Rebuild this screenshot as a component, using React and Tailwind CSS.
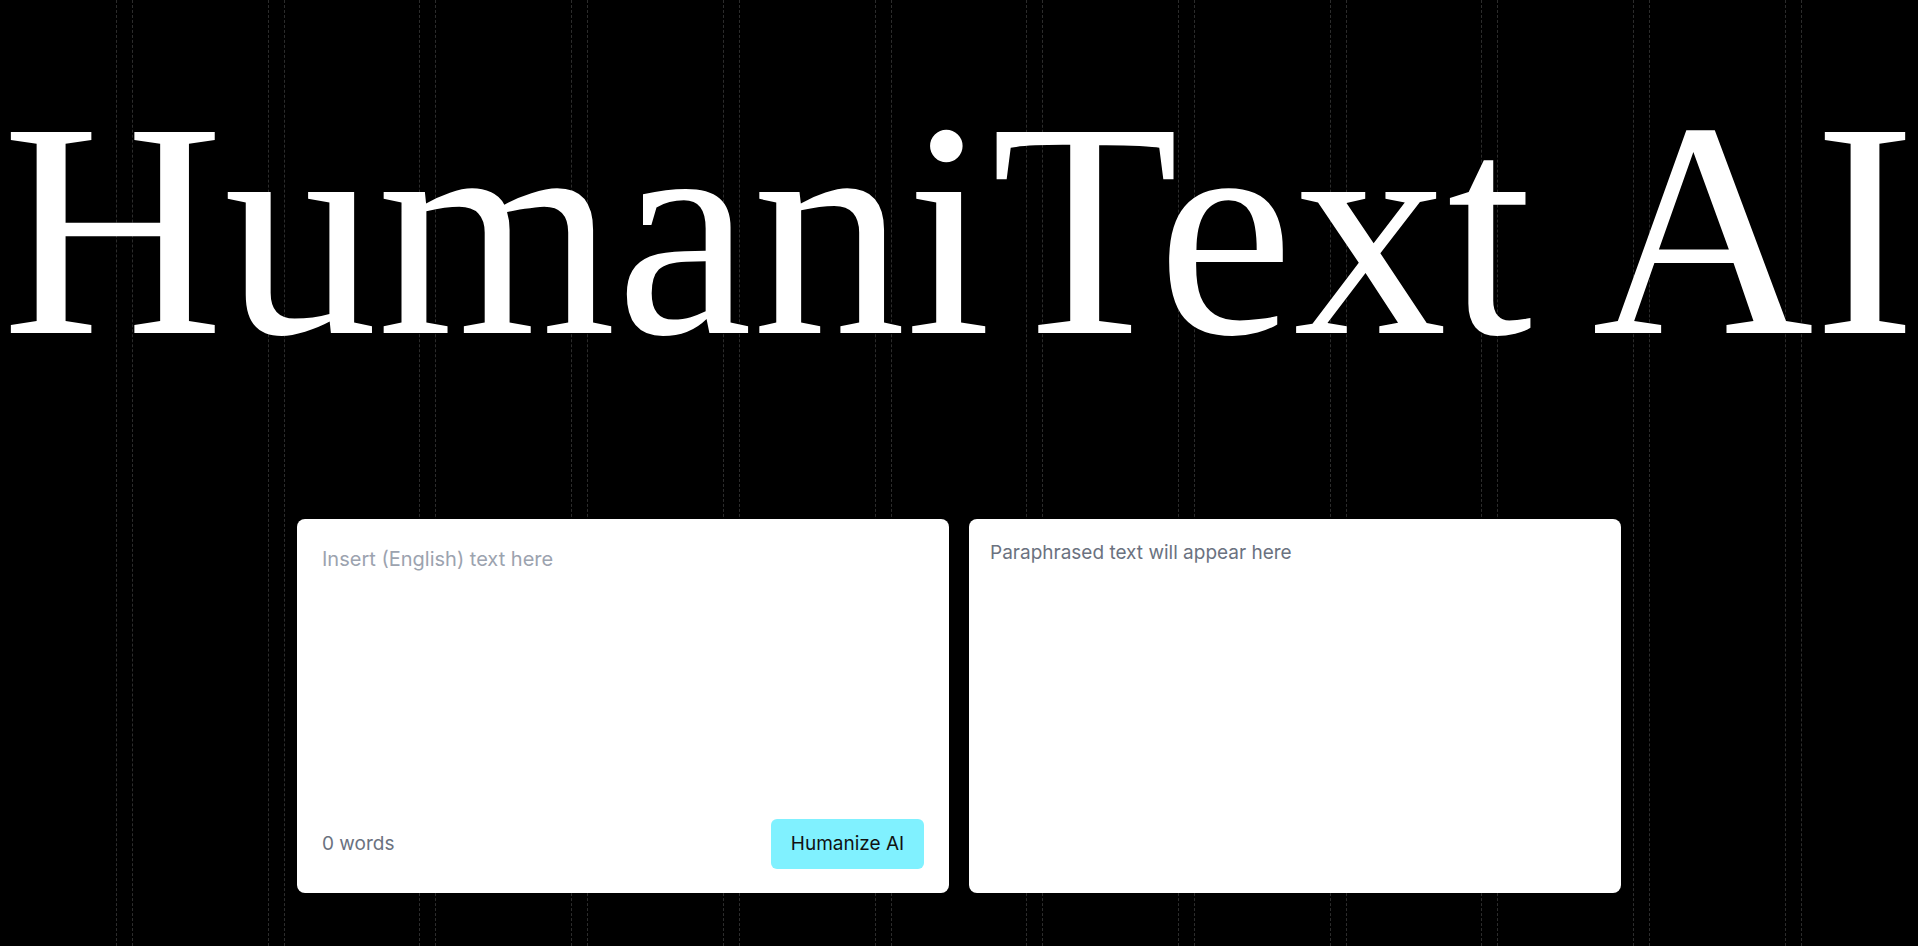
import React from 'react';

const guideLines = Array.from({ length: 12 });

export default function App() {
    return (
        <div className="relative min-h-screen w-full overflow-hidden bg-black [font-family:'Inter',sans-serif]">
            {/* Dashed guide lines in the background */}
            <div className="pointer-events-none absolute inset-0 flex justify-between px-[116px]">
                {guideLines.map((_, i) => (
                    <div key={i} className="h-full w-[17px] border-x border-dashed border-[#2c2c2c]" />
                ))}
            </div>

            <div className="relative flex flex-col items-center">
                {/* Title */}
                <h1 className="whitespace-nowrap pt-[76px] text-center [font-family:'Liberation_Serif',serif] text-[307px] font-normal leading-none text-white">
                    HumaniText AI
                </h1>

                {/* Editor panels */}
                <div className="mt-[136px] flex gap-5">
                    <div className="flex h-[374px] w-[652px] flex-col rounded-lg bg-white px-[25px] pb-6 pt-[26px]">
                        <textarea
                            className="flex-1 resize-none bg-transparent text-[20px] leading-7 text-gray-800 outline-none placeholder:text-[#9ca3af]"
                            placeholder="Insert (English) text here"
                        />
                        <div className="flex items-center justify-between">
                            <span className="text-[19px] text-[#6b7280]">0 words</span>
                            <button className="h-[50px] w-[153px] rounded-md bg-[#80f1ff] text-[19px] text-[#111]">
                                Humanize AI
                            </button>
                        </div>
                    </div>

                    <div className="h-[374px] w-[652px] rounded-lg bg-white px-[21px] pt-5">
                        <p className="text-[19px] leading-7 text-[#6b7280]">Paraphrased text will appear here</p>
                    </div>
                </div>
            </div>
        </div>
    );
}
